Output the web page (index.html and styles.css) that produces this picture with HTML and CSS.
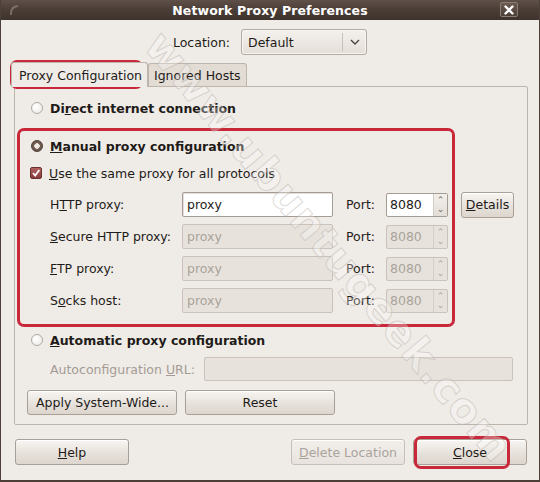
FILE: index.html
```html
<!DOCTYPE html>
<html>
<head>
<meta charset="utf-8">
<link rel="stylesheet" href="styles.css">
</head>
<body>
<div class="window">
  <div class="titlebar">
    <span class="tb-corner"></span>
    <span class="title">Network Proxy Preferences</span>
    <span class="tb-close">
      <svg width="14" height="12" viewBox="0 0 14 12"><path d="M3.5 2.5 L10.5 9.5 M10.5 2.5 L3.5 9.5" stroke="#fff" stroke-width="2.4" stroke-linecap="round"/></svg>
    </span>
  </div>
  <div class="content">
    <div class="location-row">
      <span class="loc-label">Location:</span>
      <div class="combo">
        <span class="combo-text">Default</span>
        <span class="combo-arrow">
          <svg width="12" height="8" viewBox="0 0 12 8"><path d="M2 2 L6 6 L10 2" fill="none" stroke="#4a4440" stroke-width="1.4"/></svg>
        </span>
      </div>
    </div>
    <div class="tabs">
      <div class="tab active">Proxy Configuration</div>
      <div class="tab">Ignored Hosts</div>
    </div>
    <div class="panel">
      <div class="opt-row">
        <span class="radio"></span>
        <span class="bold">Di<u>r</u>ect internet connection</span>
      </div>
      <div class="opt-row manual">
        <span class="radio on"></span>
        <span class="bold"><u>M</u>anual proxy configuration</span>
      </div>
      <div class="check-row">
        <span class="check">
          <svg width="10" height="10" viewBox="0 0 10 10"><path d="M2 5 L4.2 7.5 L8.3 2" fill="none" stroke="#fff" stroke-width="1.8"/></svg>
        </span>
        <span><u>U</u>se the same proxy for all protocols</span>
      </div>
      <div class="proxy-grid">
        <span class="plabel">H<u>T</u>TP proxy:</span>
        <span class="entry">proxy</span>
        <span class="port">Port:</span>
        <span class="spin"><span class="spin-val">8080</span><span class="spin-btns"><i>&#8963;</i><i>&#8964;</i></span></span>
        <span class="btn details"><u>D</u>etails</span>

        <span class="plabel"><u>S</u>ecure HTTP proxy:</span>
        <span class="entry dis">proxy</span>
        <span class="port">Port:</span>
        <span class="spin dis"><span class="spin-val">8080</span><span class="spin-btns"><i>&#8963;</i><i>&#8964;</i></span></span>
        <span></span>

        <span class="plabel"><u>F</u>TP proxy:</span>
        <span class="entry dis">proxy</span>
        <span class="port">Port:</span>
        <span class="spin dis"><span class="spin-val">8080</span><span class="spin-btns"><i>&#8963;</i><i>&#8964;</i></span></span>
        <span></span>

        <span class="plabel">S<u>o</u>cks host:</span>
        <span class="entry dis">proxy</span>
        <span class="port">Port:</span>
        <span class="spin dis"><span class="spin-val">8080</span><span class="spin-btns"><i>&#8963;</i><i>&#8964;</i></span></span>
        <span></span>
      </div>
      <div class="opt-row auto">
        <span class="radio"></span>
        <span class="bold"><u>A</u>utomatic proxy configuration</span>
      </div>
      <div class="auto-row">
        <span class="gray">Autoconfiguration <u>U</u>RL:</span>
        <span class="entry dis wide"></span>
      </div>
      <div class="btn-row">
        <span class="btn apply">Apply System-Wide...</span>
        <span class="btn reset">Reset</span>
      </div>
    </div>
    <div class="footer">
      <span class="btn fbtn"><u>H</u>elp</span>
      <span class="spacer"></span>
      <span class="btn fbtn dis"><u>D</u>elete Location</span>
      <span class="btn fbtn"><u>C</u>lose</span>
    </div>
  </div>
  <div class="mark mark-tab"></div>
  <div class="mark mark-manual"></div>
  <div class="mark mark-close"></div>
  <div class="watermark">www.ubuntugeek.com</div>
</div>
</body>
</html>
```
FILE: styles.css
```css
* { box-sizing: border-box; }
html, body { margin: 0; padding: 0; }
body {
  font-family: "DejaVu Sans", "Liberation Sans", sans-serif;
  font-size: 12.5px;
  color: #1e1b18;
  background: #efebe7;
}
u { text-decoration: underline; text-underline-offset: 1px; }
.window {
  position: relative;
  width: 540px;
  height: 482px;
  background: #efebe7;
  border: 1px solid #4c3f37;
  border-top: none;
  border-bottom-width: 2px;
  overflow: hidden;
}
.titlebar {
  height: 20px;
  background: linear-gradient(#5f5048, #4a3d36 50%, #3e332d);
  display: flex;
  align-items: center;
  justify-content: center;
  position: relative;
}
.title {
  color: #fff;
  font-weight: bold;
  font-size: 12.5px;
  letter-spacing: 0.1px;
}
.tb-corner {
  position: absolute;
  left: 9px;
  top: 5px;
  width: 8px;
  height: 10px;
  border-left: 2px solid #9a8d84;
  border-top: 2px solid #9a8d84;
  border-top-left-radius: 8px;
  opacity: 0.6;
}
.tb-close {
  position: absolute;
  right: 21px;
  top: 2px;
  width: 18px;
  height: 15px;
  border: 1px solid #8b7c72;
  border-radius: 2px;
  background: linear-gradient(#6b5b51, #4b3e37);
  display: flex;
  align-items: center;
  justify-content: center;
}
.content {
  padding: 9px 12px 0 12px;
  display: flex;
  flex-direction: column;
}
.location-row {
  display: flex;
  align-items: center;
  justify-content: center;
  gap: 11px;
  height: 26px;
}
.combo {
  width: 126px;
  height: 26px;
  border: 1px solid #b3aaa1;
  border-radius: 3px;
  background: linear-gradient(#f4f1ed, #e4ded8);
  display: flex;
  align-items: center;
  box-shadow: inset 0 0 0 1px #f8f6f3;
}
.combo-text { flex: 1; padding-left: 6px; }
.combo-arrow {
  width: 24px;
  height: 18px;
  border-left: 1px solid #c9c1b9;
  display: flex;
  align-items: center;
  justify-content: center;
}
.tabs {
  display: flex;
  margin-top: 7px;
  height: 24px;
  align-items: flex-end;
}
.tab {
  height: 23px;
  padding: 0 5px;
  border: 1px solid #bdb4ab;
  border-bottom: none;
  border-radius: 3px 3px 0 0;
  background: #e2dcd5;
  display: flex;
  align-items: center;
}
.tab.active {
  height: 25px;
  background: #efebe7;
  margin-bottom: -1px;
  position: relative;
  z-index: 1;
  padding: 0 5px 0 7px;
  margin-left: -2px;
}
.panel {
  height: 339px;
  border: 1px solid #bdb4ab;
  border-radius: 0 2px 2px 2px;
  margin-left: 1px;
  margin-right: -1px;
  padding: 9px 14px 0 15px;
  display: flex;
  flex-direction: column;
}
.opt-row {
  display: flex;
  align-items: center;
  gap: 7px;
  height: 24px;
  padding-left: 1px;
}
.opt-row.manual { margin-top: 14px; }
.opt-row.auto { margin-top: 15px; }
.bold { font-weight: bold; }
.radio {
  width: 12px;
  height: 12px;
  border-radius: 50%;
  border: 1px solid #b1a8a0;
  background: radial-gradient(circle at 40% 35%, #fff, #ece8e4);
  flex: none;
}
.radio.on {
  border: 1px solid #4b3d36;
  background: radial-gradient(circle, #efe9e4 0 2.5px, #6e5a50 3px);
}
.check-row {
  display: flex;
  align-items: center;
  gap: 7px;
  height: 24px;
  margin-top: 3px;
}
.check {
  width: 12px;
  height: 12px;
  border-radius: 2px;
  background: linear-gradient(#b0615e, #8a3d3c);
  border: 1px solid #6b3130;
  display: flex;
  align-items: center;
  justify-content: center;
  flex: none;
}
.proxy-grid {
  display: grid;
  grid-template-columns: 132px 151px 53px 62px 66px;
  grid-template-rows: 25px 25px 25px 25px;
  row-gap: 7px;
  margin-top: 7px;
  padding-left: 20px;
  align-items: center;
}
.port { padding-left: 13px; }
.entry {
  height: 25px;
  border: 1px solid #a59c93;
  background: #fff;
  border-radius: 2px;
  display: flex;
  align-items: center;
  padding-left: 4px;
  box-shadow: inset 1px 1px 0 #e4dfda;
}
.entry.dis, .spin.dis {
  background: #e7e2dc;
  border-color: #cbc3bb;
  color: #aaa29a;
  box-shadow: none;
}
.spin {
  height: 24px;
  width: 62px;
  border: 1px solid #a59c93;
  border-radius: 2px;
  background: #fff;
  display: flex;
  align-items: stretch;
}
.spin-val { flex: 1; display: flex; align-items: center; padding-left: 3px; }
.spin-btns {
  width: 14px;
  border-left: 1px solid #d2cbc4;
  background: linear-gradient(#f3f0ec, #e3ddd7);
  display: flex;
  flex-direction: column;
  align-items: center;
  justify-content: center;
}
.spin.dis .spin-btns { background: #e7e2dc; border-left-color: #d6cfc8; }
.spin-btns i {
  font-style: normal;
  font-size: 9px;
  line-height: 9px;
  color: #6b625b;
}
.spin.dis .spin-btns i { color: #a9a097; }
.btn {
  display: flex;
  align-items: center;
  justify-content: center;
  border: 1px solid #a89f96;
  border-radius: 3px;
  background: linear-gradient(#f7f5f2, #e6e0da 60%, #ddd6cf);
  box-shadow: inset 0 1px 0 #fff;
}
.btn.dis { color: #aaa39b; border-color: #c8c0b8; background: linear-gradient(#f2efeb, #e8e3de); }
.details { width: 53px; height: 26px; margin-left: 13px; }
.auto-row {
  display: flex;
  align-items: center;
  height: 24px;
  margin-top: 5px;
  padding-left: 20px;
}
.gray { color: #a49c94; width: 154px; }
.entry.wide { width: 309px; height: 24px; }
.btn-row {
  display: flex;
  gap: 8px;
  margin-top: 9px;
  margin-left: -3px;
}
.apply, .reset { width: 150px; height: 25px; }
.apply { justify-content: flex-start; padding-left: 8px; }
.footer {
  display: flex;
  margin-top: 14px;
  margin-left: 2px;
  gap: 8px;
}
.fbtn { width: 114px; height: 26px; }
.spacer { flex: 1; }
.mark {
  position: absolute;
  border: 2px solid #c8283a;
  border-radius: 7px;
  pointer-events: none;
}
.mark-tab { left: 9px; top: 60px; width: 133px; height: 29px; }
.mark-manual { left: 16px; top: 128px; width: 438px; height: 199px; border-width: 3px; }
.mark-close { left: 413px; top: 436px; width: 96px; height: 33px; border-width: 3px; }
.watermark {
  position: absolute;
  left: 55px;
  top: 222px;
  font-family: "DejaVu Sans", sans-serif;
  font-size: 42px;
  font-weight: bold;
  color: rgba(255,255,255,0.3);
  -webkit-text-stroke: 1px rgba(180,172,165,0.45);
  transform: rotate(50deg);
  transform-origin: 50% 50%;
  white-space: nowrap;
  pointer-events: none;
  letter-spacing: 1px;
}
```
